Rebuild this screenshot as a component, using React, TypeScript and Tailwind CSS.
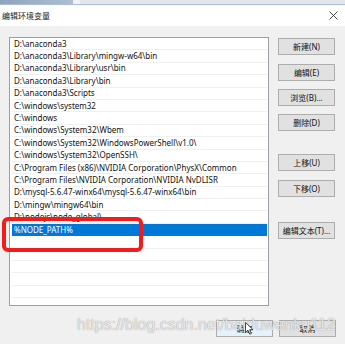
import React from "react";

const rows: string[] = [
  "D:\\anaconda3",
  "D:\\anaconda3\\Library\\mingw-w64\\bin",
  "D:\\anaconda3\\Library\\usr\\bin",
  "D:\\anaconda3\\Library\\bin",
  "D:\\anaconda3\\Scripts",
  "C:\\windows\\system32",
  "C:\\windows",
  "C:\\windows\\System32\\Wbem",
  "C:\\windows\\System32\\WindowsPowerShell\\v1.0\\",
  "C:\\windows\\System32\\OpenSSH\\",
  "C:\\Program Files (x86)\\NVIDIA Corporation\\PhysX\\Common",
  "C:\\Program Files\\NVIDIA Corporation\\NVIDIA NvDLISR",
  "D:\\mysql-5.6.47-winx64\\mysql-5.6.47-winx64\\bin",
  "D:\\mingw\\mingw64\\bin",
  "D:\\nodejs\\node_global\\",
  "%NODE_PATH%",
  "",
  "",
  "",
  "",
  "",
  "",
];

const font = "font-['Noto_Sans','Noto_Sans_CJK_SC',sans-serif]";

function Btn({ label, className = "" }: { label: string; className?: string }) {
  return (
    <div
      className={`w-[57px] h-[17px] flex items-center justify-center bg-[#e1e1e1] border border-[#adadad] text-[8px] text-[#111] leading-none ${className}`}
    >
      {label}
    </div>
  );
}

export default function App() {
  return (
    <div className={`relative w-[345px] h-[344px] bg-[#f0f0f0] overflow-hidden ${font}`}>
      {/* top strip */}
      <div className="flex h-[5px] bg-[#e4e7eb] border-b border-[#a9bdd3]">
        <div className="w-[73px] bg-gradient-to-r from-[#8ea4bd] to-[#aebfd1]" />
        <div className="w-[7px] bg-[#f2f3f5]" />
        <div className="flex-1 bg-[#e2e5e9]" />
      </div>
      {/* title bar */}
      <div className="h-[21px] bg-white flex items-center justify-between pl-[2px] pr-[6px]">
        <span className="text-[8px] text-[#222] leading-none">编辑环境变量</span>
        <svg width="9" height="9" viewBox="0 0 9 9" className="mr-[1px]">
          <path d="M0.5 0.5 L8.5 8.5 M8.5 0.5 L0.5 8.5" stroke="#333" strokeWidth="0.9" />
        </svg>
      </div>
      {/* body */}
      <div className="flex pl-[9px] pt-[11px]">
        <div className="w-[260px] h-[269px] bg-white border border-[#9a9fa6] overflow-hidden pl-[2px] pr-[1px]">
          {rows.map((r, i) => (
            <div
              key={i}
              className={`h-[12.4px] flex items-center pl-[2px] text-[8px] leading-none whitespace-nowrap overflow-hidden border-b ${
                i === 15
                  ? "bg-[#0078d7] text-white border-[#0078d7]"
                  : "text-[#111] border-[#f0f0f0]"
              }`}
            >
              {r}
            </div>
          ))}
        </div>
        <div className="flex flex-col ml-[9px]">
          <Btn label="新建(N)" className="mt-[1px]" />
          <Btn label="编辑(E)" className="mt-[9px]" />
          <Btn label="浏览(B)..." className="mt-[8px]" />
          <Btn label="删除(D)" className="mt-[8px]" />
          <Btn label="上移(U)" className="mt-[23px]" />
          <Btn label="下移(O)" className="mt-[9px]" />
          <Btn label="编辑文本(T)..." className="mt-[25px]" />
        </div>
      </div>
      {/* bottom buttons */}
      <div className="flex justify-end gap-[6px] pr-[9px] mt-[14px]">
        <Btn label="确定" className="w-[56px] border-[#0078d7] bg-[#e5f1fb]" />
        <Btn label="取消" />
      </div>
      {/* watermark */}
      <div className="absolute left-[77px] top-[317px] text-[16px] leading-none font-['Liberation_Sans',sans-serif] text-[rgba(255,255,255,0.8)] [text-shadow:0_0_1px_#7a7a7a] whitespace-nowrap pointer-events-none">
        https://blog.csdn.net/baiduwenku112
      </div>
      {/* cursor */}
      <svg className="absolute left-[245px] top-[322px]" width="9" height="13" viewBox="0 0 9 13">
        <path d="M0.5 0.5 L0.5 10.5 L3 8.2 L4.8 12.2 L6.3 11.5 L4.6 7.7 L8 7.7 Z" fill="white" stroke="#222" strokeWidth="0.8" />
      </svg>
      {/* red highlight box */}
      <div className="absolute left-[2px] top-[217px] w-[141px] h-[35px] border-[4px] border-[#f21c1c] rounded-[6px] pointer-events-none" />
    </div>
  );
}
